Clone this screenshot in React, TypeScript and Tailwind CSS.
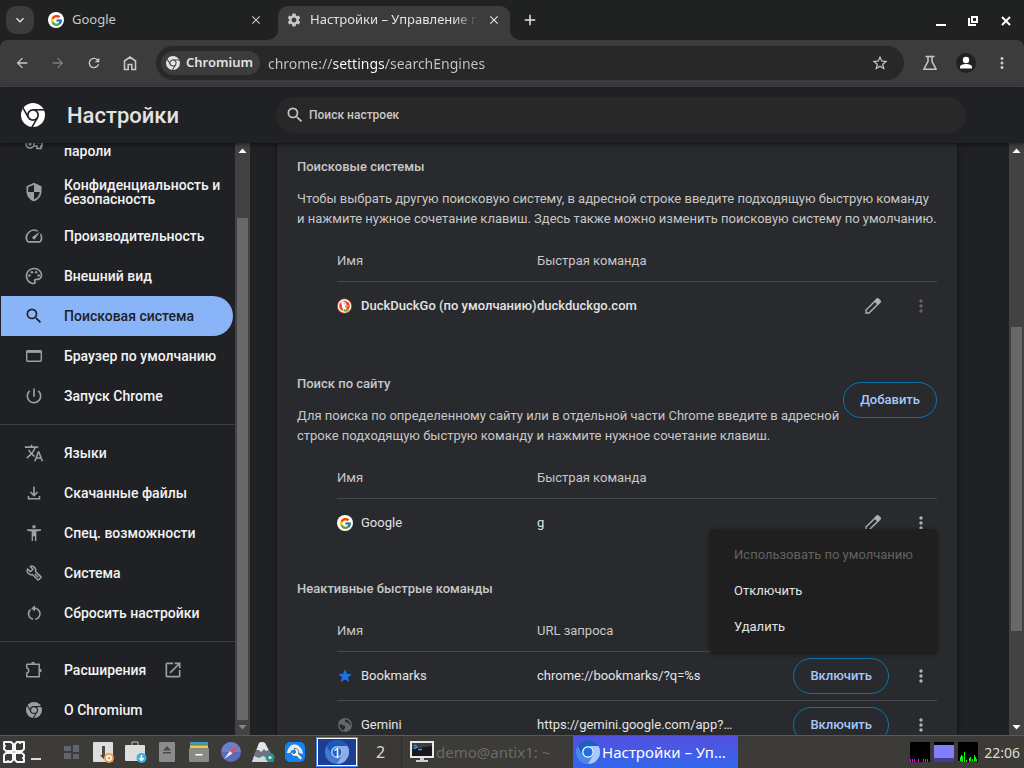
import type { ComponentType, ReactNode } from "react";
import { FcGoogle } from "react-icons/fc";
import {
  MdAdd,
  MdArrowBack,
  MdArrowForward,
  MdClose,
  MdExpandMore,
  MdMoreVert,
  MdOpenInNew,
  MdOutlinePalette,
  MdOutlineSpeed,
  MdOutlineStarBorder,
  MdPowerSettingsNew,
  MdRefresh,
  MdSearch,
  MdSecurity,
  MdSettings,
  MdStar,
  MdTranslate,
} from "react-icons/md";

type IconProps = { className?: string };

function ChromiumMark({ className }: IconProps) {
  return (
    <svg viewBox="0 0 24 24" className={className} aria-hidden="true">
      <mask id="chromium-cuts">
        <rect width="24" height="24" fill="#fff" />
        <circle cx="12" cy="12" r="6" fill="#000" />
        <g stroke="#000" strokeWidth="1.6">
          <path d="M12 6.8H24" />
          <path d="M12 6.8H24" transform="rotate(120 12 12)" />
          <path d="M12 6.8H24" transform="rotate(240 12 12)" />
        </g>
        <circle cx="12" cy="12" r="4.3" fill="#fff" />
      </mask>
      <circle cx="12" cy="12" r="12" fill="currentColor" mask="url(#chromium-cuts)" />
    </svg>
  );
}

function ChromiumColor({ className }: IconProps) {
  return (
    <svg viewBox="0 0 24 24" className={className} aria-hidden="true">
      <circle cx="12" cy="12" r="12" fill="#4a8ae6" />
      <path d="M1.6 6A12 12 0 0 1 22.4 6H12A6 6 0 0 0 6.8 15Z" fill="#1f5fc4" />
      <path d="M22.4 6A12 12 0 0 1 12 24l5.2-9A6 6 0 0 0 12 6Z" fill="#a9c9fb" />
      <circle cx="12" cy="12" r="5.8" fill="#fff" />
      <circle cx="12" cy="12" r="4.6" fill="#1f6fe0" />
    </svg>
  );
}

function KeyIcon({ className }: IconProps) {
  return (
    <svg viewBox="0 0 18 18" className={className} fill="none" stroke="currentColor" strokeWidth="1.6" aria-hidden="true">
      <circle cx="5" cy="9" r="4" />
      <circle cx="5" cy="9" r="1" fill="currentColor" />
      <path d="M9 7.5h8v3.5h-1v2.5h-4V11H9" />
    </svg>
  );
}

function WindowIcon({ className }: IconProps) {
  return (
    <svg viewBox="0 0 20 20" className={className} fill="none" stroke="currentColor" strokeWidth="1.4" aria-hidden="true">
      <rect x="2.7" y="4.7" width="14.6" height="10.6" rx="1" />
      <path d="M2.7 5.7h14.6" strokeWidth="2.400" />
    </svg>
  );
}

function DownloadIcon({ className }: IconProps) {
  return (
    <svg viewBox="0 0 20 20" className={className} fill="none" stroke="currentColor" strokeWidth="1.6" aria-hidden="true">
      <path d="M10 3.500v8.500M6.500 9l3.500 3.500L13.500 9M4.500 13v2.700h11V13" />
    </svg>
  );
}

function PersonArmsIcon({ className }: IconProps) {
  return (
    <svg viewBox="0 0 16 16" className={className} fill="currentColor" aria-hidden="true">
      <circle cx="8" cy="1.8" r="1.7" />
      <path d="M1 4.2h14v1.6l-4.6.6V16H8.9v-4.8H7.1V16H5.6V6.4L1 5.8Z" />
    </svg>
  );
}

function WrenchIcon({ className }: IconProps) {
  return (
    <svg viewBox="0 0 16 16" className={className} fill="none" stroke="currentColor" strokeWidth="1.5" strokeLinejoin="round" aria-hidden="true">
      <path d="M4.2 1.4 7 4.2 4.4 6.6 1.5 4C.8 5.9 1.3 7.5 2.4 8.5c1.2 1.2 2.7 1.4 4 1l5 5c.5.5 1 .5 1.5 0l1.6-1.6c.5-.5.5-1 0-1.5l-5-4.9c.5-1.4.2-3-1-4.1C7.3 1.2 5.7.8 4.2 1.4Z" />
      <path d="m9 9 3.2 3.2" />
    </svg>
  );
}

function ResetIcon({ className }: IconProps) {
  return (
    <svg viewBox="0 0 16 16" className={className} fill="none" stroke="currentColor" strokeWidth="1.5" aria-hidden="true">
      <path d="M4.6 4.6A5.4 5.4 0 0 0 7 14.2M9.2 14.2A5.4 5.4 0 0 0 8 3.4" />
      <path d="M9 .3 5.2 3.4 9 6.5Z" fill="currentColor" stroke="none" />
    </svg>
  );
}

function ExtensionIcon({ className }: IconProps) {
  return (
    <svg viewBox="0 0 18 18" className={className} fill="none" stroke="currentColor" strokeWidth="1.5" strokeLinejoin="round" aria-hidden="true">
      <path d="M1.8 3.2H14.2V15.8H1.8V12c2.6-.5 2.6-4.5 0-5Z" />
      <path d="M6 2.8a2 2 0 0 1 4 0ZM14.6 7.5a2 2 0 0 1 0 4Z" fill="currentColor" stroke="none" />
    </svg>
  );
}

function PencilIcon({ className }: IconProps) {
  return (
    <svg viewBox="0 0 16 16" className={className} fill="none" stroke="currentColor" strokeWidth="1.4" aria-hidden="true">
      <path d="M1 15v-3L11.8 1.2c.6-.5 1.1-.5 1.6 0l1.4 1.4c.5.5.5 1 0 1.6L4 15Z" />
      <path d="m10 3.200 2.400-2.300 2.700 2.700-2.300 2.400Z" fill="currentColor" />
    </svg>
  );
}

function FlaskIcon({ className }: IconProps) {
  return (
    <svg viewBox="0 0 16 16" className={className} fill="none" stroke="currentColor" strokeWidth="1.5" strokeLinejoin="round" aria-hidden="true">
      <path d="M3.5 1.5h9M6 1.5v4.8L1.8 14.3h12.4L10 6.3V1.5" />
    </svg>
  );
}

function DuckIcon({ className }: IconProps) {
  return (
    <svg viewBox="0 0 16 16" className={className} aria-hidden="true">
      <circle cx="7.5" cy="8" r="7.5" fill="#de4a2e" />
      <circle cx="7.5" cy="8" r="6" fill="none" stroke="#fff" strokeWidth="1.3" />
      <path d="M4.3 4c2-.9 4.600-.3 5 2.200l.4 6.800c-1 .5-2.500.6-3.500.2L4.700 7Z" fill="#fff" />
      <path d="M8 7.300c1.300-.5 3-.3 4 0-.5 1.500-1.800 2.200-4 2.200Z" fill="#f29a2e" />
      <path d="m6.500 10.800 2 .8 2.700-.8.3 2.200-2.500.8-2.200-.3Z" fill="#58b947" />
      <circle cx="7.200" cy="5.800" r=".6" fill="#2d4f8e" />
    </svg>
  );
}

function GlobeIcon({ className }: IconProps) {
  return (
    <svg viewBox="0 0 16 16" className={className} aria-hidden="true">
      <circle cx="8" cy="8" r="7" fill="#63666a" />
      <path d="M2.500 7c2 .3 3 1.500 4.500 1.500s1.500 1 1 2-.5 2-1.500 3C3.500 12.800 2.300 10 2.500 7ZM8 2.500c.5 1-.5 2 .8 2.800s2.200-.3 2.700 1 .5 2 2 2c0-3.300-2.500-5.800-5.500-5.800Z" fill="#292a2d" />
    </svg>
  );
}

function GoogleBadge() {
  return (
    <span className="flex size-4 shrink-0 items-center justify-center rounded-full bg-white">
      <FcGoogle className="size-[13px]" />
    </span>
  );
}

function TabFoot({ className }: IconProps) {
  return (
    <svg viewBox="0 0 10 10" className={className} aria-hidden="true">
      <path d="M10 0v10H0A10 10 0 0 0 10 0Z" fill="#3c3c3c" />
    </svg>
  );
}

function TabStrip() {
  return (
    <div className="flex h-10 shrink-0 items-end bg-[#202221] pl-1.5 text-[13px] text-[#c7c7c7]">
      <button aria-label="Поиск вкладок" className="mb-1.5 flex size-7 items-center justify-center rounded-[10px] bg-[#3c3c3c] text-[#e3e3e3]">
        <MdExpandMore className="size-4" />
      </button>
      <div className="ml-2 flex h-[34px] w-[236px] items-center pb-1.5 pl-1.5">
        <GoogleBadge />
        <span className="ml-2 flex-1">Google</span>
        <button aria-label="Закрыть Google" className="mr-[15px]">
          <MdClose className="size-3.5" />
        </button>
      </div>
      <div className="relative flex h-[34px] w-[232px] items-center rounded-t-[10px] bg-[#3c3c3c] pb-1.5 pl-2 text-[#e3e3e3]">
        <TabFoot className="absolute bottom-0 -left-2.5 size-2.5" />
        <TabFoot className="absolute -right-2.5 bottom-0 size-2.5 -scale-x-100" />
        <MdSettings className="size-4 shrink-0 text-[#c7c7c7]" />
        <span className="ml-2 w-[168px] overflow-hidden whitespace-nowrap [mask-image:linear-gradient(to_right,#000_144px,transparent)]">
          Настройки – Управление поиском
        </span>
        <button aria-label="Закрыть Настройки" className="ml-[9px]">
          <MdClose className="size-3.5" />
        </button>
      </div>
      <button aria-label="Новая вкладка" className="mb-[11px] ml-[11px] text-[#e3e3e3]">
        <MdAdd className="size-4.5" />
      </button>
      <div className="mr-[11px] mb-3 ml-auto flex items-center gap-[19px] text-white">
        <button aria-label="Свернуть">
          <svg viewBox="0 0 14 14" className="size-3.5"><path d="M3 10h10v2H3Z" fill="currentColor" /></svg>
        </button>
        <button aria-label="Восстановить">
          <svg viewBox="0 0 14 14" className="size-3.5" fill="none" stroke="currentColor" strokeWidth="2">
            <path d="M6 3h5v5H6ZM3 4v7h7" />
          </svg>
        </button>
        <button aria-label="Закрыть">
          <svg viewBox="0 0 14 14" className="size-3.5" stroke="currentColor" strokeWidth="2"><path d="m3 3 8 8M11 3l-8 8" /></svg>
        </button>
      </div>
    </div>
  );
}

function Toolbar() {
  return (
    <div className="shrink-0 bg-[#202221]">
      <div className="flex h-[47px] items-center rounded-t-lg border-b border-[#4b4b4b] bg-[#3c3c3c] pl-3.5 text-[#c7c7c7]">
        <button aria-label="Назад"><MdArrowBack className="size-4" /></button>
        <button aria-label="Вперёд" disabled className="ml-5 text-[#7c7c7c]"><MdArrowForward className="size-4" /></button>
        <button aria-label="Обновить" className="ml-5"><MdRefresh className="size-4" /></button>
        <button aria-label="Главная" className="ml-5">
          <svg viewBox="0 0 16 16" className="size-4" fill="none" stroke="currentColor" strokeWidth="1.6">
            <path d="M2.5 14.5V6L8 2l5.5 4v8.5H9.8V9.5H6.2v5Z" />
          </svg>
        </button>
        <div className="ml-[18px] flex h-[34px] flex-1 items-center rounded-full bg-[#282828] pr-[15px] pl-[5px]">
          <button className="flex h-6 items-center gap-1.5 rounded-full bg-[#3c3c3c] pr-[7px] pl-[5px] text-[13px] font-semibold text-[#e3e3e3]">
            <ChromiumMark className="size-3.5" />
            Chromium
          </button>
          <input
            aria-label="Адресная строка"
            defaultValue="chrome://settings/searchEngines"
            className="ml-2 min-w-0 flex-1 bg-[linear-gradient(to_right,#c7c7c7_64px,#ffffff_64px,#ffffff_117px,#c7c7c7_117px)] bg-clip-text text-[14px] text-transparent outline-none"
          />
          <button aria-label="Добавить в закладки"><MdOutlineStarBorder className="size-[18px]" /></button>
        </div>
        <button aria-label="Эксперименты" className="ml-[18px]"><FlaskIcon className="size-4" /></button>
        <button aria-label="Профиль" className="ml-[18px] flex size-5 items-center justify-center rounded-full bg-[#202221] text-white">
          <svg viewBox="0 0 20 20" className="size-5" fill="currentColor">
            <circle cx="10" cy="7" r="3.2" />
            <path d="M4 15.5v-1.5c0-2 3-3 6-3s6 1 6 3v1.5Z" />
          </svg>
        </button>
        <button aria-label="Меню" className="mr-[13px] ml-[17px]"><MdMoreVert className="size-[18px]" /></button>
      </div>
    </div>
  );
}

function SettingsHeader() {
  return (
    <header className="relative z-20 flex h-14 shrink-0 items-center bg-[#202124] shadow-[0_1px_5px_rgba(0,0,0,0.6)]">
      <ChromiumMark className="ml-[21px] size-6 text-white" />
      <h1 className="ml-[22px] w-[209px] text-[22px] font-medium text-[#e3e3e3]">Настройки</h1>
      <label className="flex h-9 max-w-[690px] flex-1 items-center rounded-full bg-[#282828] pl-[9px] text-[#c7c7c7]">
        <MdSearch className="size-5" />
        <input
          type="search"
          aria-label="Поиск настроек"
          placeholder="Поиск настроек"
          className="ml-1 flex-1 text-[12px] font-medium outline-none placeholder:text-[#c7c7c7]"
        />
      </label>
    </header>
  );
}

type NavEntry = {
  label: string;
  icon: ComponentType<IconProps>;
  drawn?: boolean;
  tall?: boolean;
  active?: boolean;
  external?: boolean;
};

const navGroups: NavEntry[][] = [
  [
    { label: "Автозаполнение и пароли", icon: KeyIcon, tall: true },
    { label: "Конфиденциальность и безопасность", icon: MdSecurity, tall: true },
    { label: "Производительность", icon: MdOutlineSpeed },
    { label: "Внешний вид", icon: MdOutlinePalette },
    { label: "Поисковая система", icon: MdSearch, active: true },
    { label: "Браузер по умолчанию", icon: WindowIcon },
    { label: "Запуск Chrome", icon: MdPowerSettingsNew },
  ],
  [
    { label: "Языки", icon: MdTranslate },
    { label: "Скачанные файлы", icon: DownloadIcon },
    { label: "Спец. возможности", icon: PersonArmsIcon, drawn: true },
    { label: "Система", icon: WrenchIcon, drawn: true },
    { label: "Сбросить настройки", icon: ResetIcon, drawn: true },
  ],
  [
    { label: "Расширения", icon: ExtensionIcon, external: true },
    { label: "О Chromium", icon: ChromiumMark, drawn: true },
  ],
];

function NavLink({ entry }: { entry: NavEntry }) {
  const Icon = entry.icon;
  const height = entry.tall ? "h-12" : "h-10";
  const tone = entry.active ? "bg-[#8ab4f8] text-[#202124]" : "text-[#f1f3f4]";
  const iconSize = entry.drawn ? "size-4" : entry.icon === ExtensionIcon || entry.icon === KeyIcon ? "size-[18px]" : "size-5";
  const iconTone = entry.active ? "text-[#202124]" : "text-[#9aa0a6]";
  return (
    <a href="#" className={`mr-0.5 ml-px flex shrink-0 items-center rounded-r-full ${height} ${tone}`}>
      <span className="ml-[23px] flex w-10 shrink-0 items-center">
        <span className="flex w-5 justify-center"><Icon className={`${iconSize} shrink-0 ${iconTone}`} /></span>
      </span>
      <span className="max-w-[165px] leading-[14px]">{entry.label}</span>
      {entry.external && <MdOpenInNew className="ml-[17px] size-5 text-[#9aa0a6]" />}
    </a>
  );
}

function Sidebar() {
  return (
    <nav className="flex w-[235px] shrink-0 flex-col justify-end overflow-hidden pb-[5px] text-[14px] font-medium">
      {navGroups.map((group, i) => (
        <div key={i} className={i > 0 ? "mt-2 shrink-0 border-t border-[#3c4043] pt-2" : "shrink-0"}>
          {group.map((entry) => (
            <NavLink key={entry.label} entry={entry} />
          ))}
        </div>
      ))}
    </nav>
  );
}

function Arrow({ down, muted }: { down?: boolean; muted?: boolean }) {
  return (
    <svg viewBox="0 0 15 15" className={`size-[15px] shrink-0 ${muted ? "text-[#868686]" : "text-white"}`} aria-hidden="true">
      <path d={down ? "M3.5 5h8l-4 4.5Z" : "M3.5 10h8l-4-4.5Z"} fill="currentColor" />
    </svg>
  );
}

function Scrollbar({ before, thumb, after, muted }: { before: number; thumb: number; after: number; muted?: boolean }) {
  return (
    <div className="flex w-[15px] shrink-0 flex-col bg-[#424242]" aria-hidden="true">
      <Arrow />
      <div style={{ flexGrow: before }} />
      <div className="mx-0.5 bg-[#686868]" style={{ flexGrow: thumb }} />
      <div style={{ flexGrow: after }} />
      <Arrow down muted={muted} />
    </div>
  );
}

type Engine = { name: string; value: string; icon: ReactNode; isDefault?: boolean; inactive?: boolean; menuOpen?: boolean };

function EngineMenu() {
  return (
    <div role="menu" className="absolute top-[30px] right-0 z-10 flex flex-col rounded bg-[#1f1f1f] py-2 text-[#e3e3e3] shadow-[0_1px_4px_rgba(0,0,0,0.5)]">
      <button role="menuitem" disabled className="h-9 px-6 text-left whitespace-nowrap text-[#626262]">Использовать по умолчанию</button>
      <button role="menuitem" className="h-9 px-6 text-left">Отключить</button>
      <button role="menuitem" className="h-9 px-6 text-left">Удалить</button>
    </div>
  );
}

function PillButton({ children }: { children: ReactNode }) {
  return (
    <button className="h-9 shrink-0 rounded-full border border-[#0b76ae] px-4 font-medium text-[#a8c7fa]">{children}</button>
  );
}

function EngineTable({ valueTitle, engines }: { valueTitle: string; engines: Engine[] }) {
  return (
    <div className="mt-3 pl-10">
      <table className="w-full table-fixed border-separate border-spacing-0 text-left text-[#e3e3e3]">
        <thead className="text-[#c7c7c7]">
          <tr className="h-10">
            <th className="w-[200px] p-0 font-normal">Имя</th>
            <th className="w-[200px] p-0 font-normal">{valueTitle}</th>
            <th className="p-0" aria-label="Действия" />
          </tr>
        </thead>
        <tbody>
          {engines.map((engine) => (
            <tr key={engine.name} className={engine.isDefault ? "h-[49px] font-medium" : "h-[49px]"}>
              <td className="border-t border-[#46474a] p-0">
                <div className="flex items-center gap-2 whitespace-nowrap">
                  {engine.icon}
                  {engine.name}
                </div>
              </td>
              <td className="truncate border-t border-[#46474a] p-0 pr-1">{engine.value}</td>
              <td className="relative border-t border-[#46474a] p-0">
                <div className="flex items-center justify-end pr-1.5 text-[#aeb2b7]">
                  {engine.inactive ? (
                    <PillButton>Включить</PillButton>
                  ) : (
                    <button aria-label={`Изменить ${engine.name}`}><PencilIcon className="size-4" /></button>
                  )}
                  <button
                    aria-label={`Ещё: ${engine.name}`}
                    disabled={engine.isDefault}
                    className={`${engine.inactive ? "ml-[22px]" : "ml-[30px]"} ${engine.isDefault ? "text-[#626366]" : ""}`}
                  >
                    <MdMoreVert className="size-5" />
                  </button>
                </div>
                {engine.menuOpen && <EngineMenu />}
              </td>
            </tr>
          ))}
        </tbody>
      </table>
    </div>
  );
}

function SearchEnginesPage() {
  return (
    <main className="min-w-0 flex-1 overflow-hidden pr-[52px] pl-[27px]">
      <div className="min-h-full max-w-[680px] bg-[#292a2d] px-5 pt-3.5 text-[13px] leading-5 text-[#c7c7c7] shadow-[0_0_5px_rgba(0,0,0,0.5)]">
        <section>
          <h2 className="font-medium">Поисковые системы</h2>
          <p className="mt-3">
            Чтобы выбрать другую поисковую систему, в адресной строке введите подходящую быструю команду и нажмите нужное
            сочетание клавиш. Здесь также можно изменить поисковую систему по умолчанию.
          </p>
          <EngineTable
            valueTitle="Быстрая команда"
            engines={[{ name: "DuckDuckGo (по умолчанию)", value: "duckduckgo.com", icon: <DuckIcon className="size-4 shrink-0" />, isDefault: true }]}
          />
        </section>
        <section className="mt-11">
          <div className="flex items-center">
            <div className="flex-1">
              <h2 className="font-medium">Поиск по сайту</h2>
              <p className="mt-3">
                Для поиска по определенному сайту или в отдельной части Chrome введите в адресной строке подходящую быструю
                команду и нажмите нужное сочетание клавиш.
              </p>
            </div>
            <div className="pb-5"><PillButton>Добавить</PillButton></div>
          </div>
          <EngineTable
            valueTitle="Быстрая команда"
            engines={[{ name: "Google", value: "g", icon: <GoogleBadge />, menuOpen: true }]}
          />
        </section>
        <section className="mt-8">
          <h2 className="font-medium">Неактивные быстрые команды</h2>
          <EngineTable
            valueTitle="URL запроса"
            engines={[
              { name: "Bookmarks", value: "chrome://bookmarks/?q=%s", icon: <MdStar className="size-4 shrink-0 text-[#1a73e8]" />, inactive: true },
              { name: "Gemini", value: "https://gemini.google.com/app?q=%s", icon: <GlobeIcon className="size-4 shrink-0" />, inactive: true },
            ]}
          />
        </section>
      </div>
    </main>
  );
}

const launchers: { label: string; art: ReactNode }[] = [
  {
    label: "Рабочий стол",
    art: (
      <g fill="#5f6470">
        <path d="M3 4h7v5H3ZM12 3h6v7h-6ZM3 11h7v6H3ZM12 12h6v5h-6Z" />
      </g>
    ),
  },
  {
    label: "Установщик",
    art: (
      <g>
        <rect x="0" y="0" width="20" height="20" rx="1" fill="#dedede" />
        <path d="M9 4h3v9h2l-3.5 4L7 13h2Z" fill="#4a4a4a" />
        <circle cx="16" cy="16" r="5" fill="#f0a04b" />
        <circle cx="16" cy="16" r="2.3" fill="none" stroke="#fff" strokeWidth="1.5" />
      </g>
    ),
  },
  {
    label: "Пакеты",
    art: (
      <g>
        <path d="M7 3V0h6v3" fill="none" stroke="#c5c5c5" />
        <rect x="0" y="3" width="20" height="16" rx="1" fill="#dedede" />
        <circle cx="16.5" cy="16" r="5" fill="#3daee0" />
        <path d="M16.5 13v5m-2.2-2 2.2 2.3 2.2-2.3" fill="none" stroke="#fff" strokeWidth="1.5" />
      </g>
    ),
  },
  {
    label: "Диски",
    art: (
      <g>
        <rect x="2" y="0" width="16" height="20" rx="1" fill="#8b8b8b" />
        <path d="m10 4 4 4.5H6ZM6 10h8v1.5H6Z" fill="#4a4a4a" />
      </g>
    ),
  },
  {
    label: "Файлы",
    art: (
      <g>
        <path d="M1 0h18v2.5H1Z" fill="#3d94e0" />
        <path d="M1 2.5h18V4H1Z" fill="#6cc04a" />
        <path d="M1 4h18v2H1Z" fill="#f6c644" />
        <rect x="0" y="6" width="20" height="14" rx="1" fill="#8b8b86" />
        <path d="M6.5 12h7v1.5h-7Z" fill="#fff" />
      </g>
    ),
  },
  {
    label: "Браузер",
    art: (
      <g>
        <circle cx="10" cy="10" r="10" fill="#5a6bbd" />
        <path d="M0 10A10 10 0 0 1 20 10Z" fill="#7384cf" opacity=".7" />
        <path d="M17 3 11.5 11.5 9 9Z" fill="#ee4b3e" />
        <path d="M3 17 9 9l2.5 2.5Z" fill="#e8eaf6" />
      </g>
    ),
  },
  {
    label: "Настройка системы",
    art: (
      <g>
        <path d="M-1 20 1 13 6 1q3-2 6 0l6 10 3 9Z" fill="#6d747c" />
        <path d="M3.500 8 6 1q3-2 6 0l3.500 7-2.500 1-2-2-3 3-2-2Z" fill="#e4e7ea" />
        <path d="m-1 20 2-6 5 2 4-2 5 2v4Z" fill="#d3d7db" />
        <circle cx="17" cy="15.5" r="4.5" fill="#2f8f88" />
        <circle cx="17" cy="15.5" r="1.6" fill="#cfe8e5" />
      </g>
    ),
  },
  {
    label: "Обслуживание",
    art: (
      <g>
        <rect x="0" y="0" width="20" height="20" rx="5" fill="#1184f5" />
        <path d="M2 11C3 5 6 2.500 9.500 2.500S17 5 18 12l-4-1-2-3H7l-2 3Z" fill="#e6ebef" />
        <path d="M9 6.500a4 4 0 0 1 4.500 5.500l4 4-2 2-4-4A4 4 0 0 1 6 9.500L9 12l2-2Z" fill="#fff" stroke="#4d5a66" strokeWidth=".8" />
      </g>
    ),
  },
];

const netBars = [[0, 3], [2, 3], [4, 3], [8, 3], [13, 3], [15, 3], [17, 3]];
const loadBars = [[2, 5], [3, 7], [4, 6], [6, 10], [8, 2], [11, 4], [12, 5], [14, 3], [16, 7], [17, 5], [18, 3]];

function Taskbar() {
  return (
    <footer className="flex h-[33px] shrink-0 items-center border-t border-[#5a5955] bg-[#3c3b37] text-[15px] text-[#dfdbd2]">
      <button aria-label="Меню приложений" className="ml-[3px]">
        <svg viewBox="0 0 22 22" className="size-[22px]" fill="none" stroke="#f3f6fa" strokeWidth="2">
          <g id="petal">
            <path d="M1 1h7l2 2v7H3L1 8V6l1-1-1-1Z" strokeLinejoin="round" />
          </g>
          <use href="#petal" transform="rotate(90 11 11)" />
          <use href="#petal" transform="rotate(180 11 11)" />
          <use href="#petal" transform="rotate(270 11 11)" />
        </svg>
      </button>
      <button aria-label="Показать рабочий стол" className="ml-1.5 flex h-4 w-2.5 items-end">
        <span className="h-0.5 w-full bg-[#dfdbd2]" />
      </button>
      <div className="ml-5 flex gap-3">
        {launchers.map((item) => (
          <button key={item.label} aria-label={item.label}>
            <svg viewBox="0 0 20 20" className="size-5 overflow-visible">{item.art}</svg>
          </button>
        ))}
      </div>
      <button className="relative ml-[11px] flex h-[30px] w-[42px] items-center justify-center border-2 border-[#4a86f7] bg-[#1c3f94] text-white outline-1 -outline-offset-2 outline-white">
        <ChromiumColor className="size-6 opacity-80" />
        <span className="absolute">1</span>
      </button>
      <button className="ml-0.5 h-full w-[42px] border-r border-[#2e2d2a] bg-[#393835] text-[16px]">2</button>
      <button className="ml-2 flex w-[163px] items-center text-[#6b6a66]">
        <svg viewBox="0 0 24 22" className="h-[22px] w-6 shrink-0">
          <path d="M0 0h24v17H0Z" fill="#e8e8e8" />
          <path d="M2 2h20v13H2Z" fill="#17191c" />
          <path d="M2 8 22 5v-3H2Z" fill="#3b3f45" />
          <path d="m4 4 3 2-3 2M8 8.5h4" stroke="#3f95ff" strokeWidth="1.5" fill="none" />
          <path d="M10 17h4v2h4v2H6v-2h4Z" fill="#cfcfcf" />
        </svg>
        <span className="ml-0.5">demo@antix1: ~</span>
      </button>
      <button className="flex h-full w-[165px] items-center bg-linear-to-b from-[#5050de] to-[#2f66ec] pl-[3px] text-white">
        <ChromiumColor className="size-6 shrink-0" />
        <span className="ml-0.5 truncate whitespace-nowrap">Настройки – Уп…</span>
      </button>
      <div className="mr-1 ml-auto flex items-center gap-1">
        <svg viewBox="0 0 20 20" className="size-5 bg-black">
          {netBars.map(([x, h]) => <rect key={x} x={x} y={20 - h} width="1" height={h} fill="#ff00ff" />)}
        </svg>
        <svg viewBox="0 0 20 20" className="size-5 bg-black">
          <rect y="3" width="20" height="13" fill="#8080ff" />
          <rect y="16" width="20" height="4" fill="#40408a" />
        </svg>
        <svg viewBox="0 0 20 20" className="size-5 bg-black">
          {loadBars.map(([x, h]) => <rect key={x} x={x} y={20 - h} width="1" height={h} fill="#00ff00" />)}
          <path d="M0 19h4v1H0ZM11 19h8v1h-8Z" fill="#ff0000" />
        </svg>
        <time className="ml-0.5 text-[14px]">22:06</time>
      </div>
    </footer>
  );
}

export default function App() {
  return (
    <div className="flex h-screen flex-col overflow-hidden bg-[#202124] font-['Noto_Sans',sans-serif]">
      <TabStrip />
      <Toolbar />
      <div className="flex min-h-0 flex-1 flex-col font-[Roboto,sans-serif]">
        <SettingsHeader />
        <div className="flex min-h-0 flex-1">
          <Sidebar />
          <Scrollbar before={60} thumb={502} after={0} muted />
          <SearchEnginesPage />
          <Scrollbar before={169} thumb={304} after={89} />
        </div>
      </div>
      <Taskbar />
    </div>
  );
}
